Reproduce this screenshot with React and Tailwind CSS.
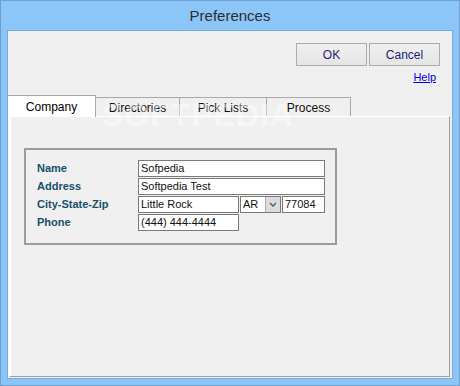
import React from "react"

const tabs = ["Company", "Directories", "Pick Lists", "Process"]

function Field({ width, value }) {
  return (
    <div
      className="h-[17px] border border-[#7a7a7a] bg-white px-[2px] text-[11px] leading-[15px] text-[#111]"
      style={{ width }}
    >
      {value}
    </div>
  )
}

export default function App() {
  return (
    <div
      className="w-[460px] h-[386px] bg-[#8cc6f8] border border-[#6e9fce] flex flex-col"
      style={{ fontFamily: '"Liberation Sans", Arial, sans-serif' }}
    >
      {/* Title bar */}
      <div className="h-[29px] flex items-center justify-center text-[15px] text-[#2e2e2e] pt-[1px]">
        Preferences
      </div>

      {/* Client area */}
      <div className="mx-[6px] h-[349px] border border-[#76acdf] bg-[#f0f0f0] flex flex-col relative">
        {/* Buttons */}
        <div className="flex justify-end gap-[2px] pt-[12px] pr-[12px]">
          <button className="w-[71px] h-[23px] border border-[#acacac] bg-gradient-to-b from-[#f0f0f0] to-[#e5e5e5] text-[12px] text-[#1e1e78]">
            OK
          </button>
          <button className="w-[71px] h-[23px] border border-[#acacac] bg-gradient-to-b from-[#f0f0f0] to-[#e5e5e5] text-[12px] text-[#1e1e78]">
            Cancel
          </button>
        </div>
        <div className="flex justify-end pr-[16px] pt-[5px]">
          <span className="text-[11px] leading-[13px] text-[#0000ee] underline">Help</span>
        </div>

        {/* Tabs */}
        <div className="flex items-end mt-[10px] h-[22px]">
          {tabs.map((t, i) =>
            i === 0 ? (
              <div
                key={t}
                className="w-[88px] h-[22px] bg-white border-t border-r border-[#a9a9a9] text-[12px] text-black flex items-center justify-center relative -mb-[1px] z-10"
              >
                {t}
              </div>
            ) : (
              <div
                key={t}
                className={`h-[19px] bg-[#f0f0f0] border-t border-r border-[#a9a9a9] text-[12px] text-[#111] flex items-center justify-center pt-[1px] ${
                  i === 2 ? "w-[87px]" : "w-[84px]"
                }`}
              >
                {t}
              </div>
            )
          )}
        </div>

        {/* Tab panel */}
        <div className="flex-1 mr-[2px] mb-[1px] border-t border-l-[3px] border-white border-r border-b border-r-[#a0a0a0] border-b-[#a0a0a0] pt-[31px] pl-[13px]">
          <div className="w-[313px] h-[97px] border-2 border-[#9c9c9c] pt-[10px] pl-[11px] flex flex-col gap-[1px]">
            <div className="flex items-center h-[17px]">
              <span className="w-[101px] text-[11px] font-bold text-[#16506a]">Name</span>
              <Field width={187} value="Sofpedia" />
            </div>
            <div className="flex items-center h-[17px]">
              <span className="w-[101px] text-[11px] font-bold text-[#16506a]">Address</span>
              <Field width={187} value="Softpedia Test" />
            </div>
            <div className="flex items-center h-[17px]">
              <span className="w-[101px] text-[11px] font-bold text-[#16506a]">City-State-Zip</span>
              <Field width={101} value="Little Rock" />
              <div className="ml-[1px] w-[41px] h-[17px] border border-[#7a7a7a] bg-white flex items-center text-[11px] text-[#111]">
                <span className="pl-[2px] flex-1">AR</span>
                <span className="w-[15px] h-[15px] bg-[#dcdcdc] border-l border-[#acacac] flex items-center justify-center">
                  <svg width="8" height="5" viewBox="0 0 8 5">
                    <path d="M1 1 L4 4 L7 1" stroke="#555" strokeWidth="1.3" fill="none" />
                  </svg>
                </span>
              </div>
              <div className="ml-[1px]">
                <Field width={43} value="77084" />
              </div>
            </div>
            <div className="flex items-center h-[17px]">
              <span className="w-[101px] text-[11px] font-bold text-[#16506a]">Phone</span>
              <Field width={101} value="(444) 444-4444" />
            </div>
          </div>
        </div>

        {/* watermark */}
        <div className="absolute left-[94px] top-[60px] text-[32px] font-bold tracking-[1px] text-white opacity-40 pointer-events-none">
          SOFTPEDIA
        </div>
      </div>
    </div>
  )
}
